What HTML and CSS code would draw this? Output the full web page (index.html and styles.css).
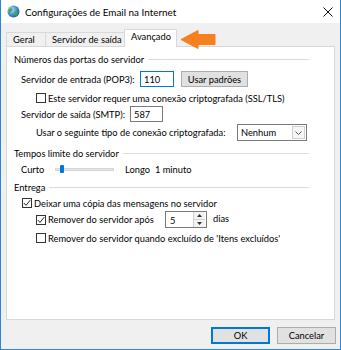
FILE: index.html
```html
<!DOCTYPE html>
<html lang="pt">
<head>
<meta charset="utf-8">
<link rel="stylesheet" href="styles.css">
</head>
<body>
<div class="window">
  <div class="titlebar">
    <svg class="appicon" width="13" height="13" viewBox="0 0 13 13">
      <defs>
        <radialGradient id="g" cx="0.35" cy="0.35" r="0.7">
          <stop offset="0" stop-color="#bfe6ff"/>
          <stop offset="0.6" stop-color="#3d8fd6"/>
          <stop offset="1" stop-color="#1d5ea8"/>
        </radialGradient>
      </defs>
      <circle cx="6.5" cy="6.5" r="6" fill="url(#g)"/>
      <path d="M3 3.5 C4.5 2.8 6 3.5 5.6 5 C5.2 6.2 3.6 6 3.4 7.5 C3.2 8.6 2.2 8.4 1.8 7.2 C1.4 5.6 2 4 3 3.5Z" fill="#4aa83f"/>
      <path d="M8 6.5 C9.2 6 10.8 6.8 10.6 8.4 C10.4 10 8.8 11 7.8 10.2 C7 9.4 7.2 7 8 6.5Z" fill="#4aa83f"/>
      <path d="M7.5 2 C8.5 1.8 9.8 2.4 9.6 3.4 C9 3.8 8 3.2 7.5 2Z" fill="#5cb84a"/>
    </svg>
    <span class="title">Configurações de Email na Internet</span>
    <svg class="close" width="10" height="10" viewBox="0 0 10 10">
      <path d="M0.5 0.5 L9.5 9.5 M9.5 0.5 L0.5 9.5" stroke="#111" stroke-width="1" fill="none"/>
    </svg>
  </div>
  <div class="client">
    <div class="tabs">
      <div class="tab">Geral</div>
      <div class="tab">Servidor de saída</div>
      <div class="tab active">Avançado</div>
    </div>
    <div class="panel">
      <div class="group-h r-h1"><span>Números das portas do servidor</span><i></i></div>
      <div class="row r-in lvl1">
        <span class="lbl w-in">Servidor de entrada (POP3):</span>
        <span class="field f-in">110</span>
        <span class="btn b-def">Usar padrões</span>
      </div>
      <div class="row r-ssl lvl2">
        <span class="cb"></span><span>Este servidor requer uma conexão criptografada (SSL/TLS)</span>
      </div>
      <div class="row r-smtp lvl1">
        <span class="lbl w-smtp">Servidor de saída (SMTP):</span>
        <span class="field f-smtp">587</span>
      </div>
      <div class="row r-enc lvl2">
        <span class="lbl w-enc">Usar o seguinte tipo de conexão criptografada:</span>
        <span class="select"><span class="sel-val">Nenhum</span><span class="sel-btn"><svg width="7" height="4" viewBox="0 0 7 4"><path d="M0.5 0.5 L3.5 3.5 L6.5 0.5" stroke="#555" fill="none"/></svg></span></span>
      </div>
      <div class="group-h r-h2"><span>Tempos limite do servidor</span><i></i></div>
      <div class="row r-time lvl1">
        <span class="lbl w-curto">Curto</span>
        <span class="slider"><span class="thumb"></span></span>
        <span class="lbl longo">Longo</span>
        <span>1 minuto</span>
      </div>
      <div class="group-h r-h3"><span>Entrega</span><i></i></div>
      <div class="row r-copy lvl1b">
        <span class="cb checked"><svg width="8" height="8" viewBox="0 0 8 8"><path d="M0.8 4 L3 6.4 L7.2 1.2" stroke="#222" stroke-width="1" fill="none"/></svg></span><span>Deixar uma cópia das mensagens no servidor</span>
      </div>
      <div class="row r-rem lvl2">
        <span class="cb checked"><svg width="8" height="8" viewBox="0 0 8 8"><path d="M0.8 4 L3 6.4 L7.2 1.2" stroke="#222" stroke-width="1" fill="none"/></svg></span><span class="lbl w-rem">Remover do servidor após</span>
        <span class="spin"><span class="spin-val">5</span><span class="spin-btns"><span class="sb"><svg width="5" height="3" viewBox="0 0 5 3"><path d="M0 3 L2.5 0 L5 3Z" fill="#333"/></svg></span><span class="sb"><svg width="5" height="3" viewBox="0 0 5 3"><path d="M0 0 L2.5 3 L5 0Z" fill="#333"/></svg></span></span></span>
        <span class="dias">dias</span>
      </div>
      <div class="row r-rem2 lvl2">
        <span class="cb"></span><span>Remover do servidor quando excluído de 'Itens excluídos'</span>
      </div>
    </div>
    <div class="buttons">
      <span class="btn b-ok">OK</span>
      <span class="btn b-cancel">Cancelar</span>
    </div>
    <svg class="arrow" width="36" height="20" viewBox="0 0 36 20">
      <path d="M0 9.5 L17 0.5 L17 4.5 L34 4.5 L34 14.5 L17 14.5 L17 18.5 Z" fill="#f7801f" stroke="#f7801f" stroke-linejoin="round" stroke-width="1"/>
    </svg>
  </div>
</div>
</body>
</html>
```
FILE: styles.css
```css
* { box-sizing: border-box; }
html, body { margin: 0; padding: 0; background: #fff; }
body {
  font-family: Lato, "Liberation Sans", sans-serif;
  font-size: 9.3px;
  color: #000;
}
.window {
  width: 341px;
  height: 350px;
  border: 1px solid #2b87d8;
  border-top: none;
  display: flex;
  flex-direction: column;
  background: #f0f0f0;
}
.titlebar {
  height: 23px;
  background: #fff;
  display: flex;
  align-items: center;
  padding-left: 6px;
  position: relative;
}
.appicon { margin-right: 5px; margin-top: -1px; }
.title { font-size: 9.9px; }
.close { margin-left: auto; margin-right: 7px; }
.client {
  flex: 1;
  position: relative;
  padding-top: 6px;
  display: flex;
  flex-direction: column;
}
.tabs {
  display: flex;
  align-items: flex-end;
  height: 17px;
  margin-left: 5px;
  position: relative;
  z-index: 2;
  white-space: nowrap;
}
.tab {
  height: 14px;
  border: 1px solid #d9d9d9;
  border-bottom: none;
  border-right: none;
  background: #f0f0f0;
  padding: 0 6px;
  display: flex;
  align-items: center;
  line-height: 1;
  flex: none;
}
.tab:first-child { width: 39px; }
.tab:nth-child(2) { width: 79px; }
.tab.active {
  height: 18px;
  margin-bottom: -1px;
  background: #fff;
  border-right: 1px solid #d9d9d9;
  width: 53px;
  padding-bottom: 3px;
}
.panel {
  margin-left: 5px;
  width: 329px;
  height: 274px;
  background: #fff;
  border: 1px solid #d9d9d9;
  padding-top: 5px;
  display: flex;
  flex-direction: column;
}
.group-h {
  display: flex;
  align-items: center;
  height: 14px;
  margin-left: 7px;
  width: 295px;
  white-space: nowrap;
}
.group-h i {
  flex: 1;
  height: 1px;
  background: #dcdcdc;
  margin-left: 4px;
}
.row {
  display: flex;
  align-items: center;
  white-space: nowrap;
}
.lvl1 { margin-left: 14px; }
.lvl1b { margin-left: 15px; }
.lvl2 { margin-left: 29px; }
.r-in { height: 16px; margin-top: 5px; }
.r-ssl { height: 12px; margin-top: 5px; }
.r-smtp { height: 16px; margin-top: 2px; }
.r-enc { height: 17px; margin-top: 2px; }
.r-h2 { margin-top: 5px; }
.r-time { height: 12px; margin-top: 3px; }
.r-h3 { margin-top: 5px; }
.r-copy { height: 12px; margin-top: 3px; }
.r-rem { height: 17px; margin-top: 2px; }
.r-rem2 { height: 12px; margin-top: 4px; }

.lbl { flex: none; overflow: visible; }
.w-in { width: 119px; }
.w-smtp { width: 109px; }
.w-enc { width: 201px; }
.w-curto { width: 34px; }
.longo { margin-right: 5px; }
.w-rem { width: 117px; }

.field {
  border: 1px solid #7a7a7a;
  height: 16px;
  display: flex;
  align-items: center;
  padding-left: 3px;
  background: #fff;
}
.f-in { width: 34px; border-color: #0078d7; }
.f-smtp { width: 33px; }
.btn {
  display: flex;
  align-items: center;
  justify-content: center;
  background: #e1e1e1;
  border: 1px solid #adadad;
}
.b-def { width: 67px; height: 16px; margin-left: 7px; }
.cb {
  width: 10px;
  height: 10px;
  border: 1px solid #333;
  background: #fff;
  margin-right: 2px;
  flex: none;
  display: flex;
  align-items: center;
  justify-content: center;
}
.select {
  width: 70px;
  height: 17px;
  border: 1px solid #7a7a7a;
  display: flex;
  align-items: center;
  background: #fff;
}
.sel-val { flex: 1; padding-left: 3px; }
.sel-btn {
  width: 13px;
  height: 13px;
  border: 1px solid #cfcfcf;
  background: #f6f6f6;
  margin-right: 1px;
  display: flex;
  align-items: center;
  justify-content: center;
}
.slider {
  width: 59px;
  height: 3px;
  background: #e6e6e6;
  border: 1px solid #d6d6d6;
  position: relative;
  margin-right: 11px;
}
.thumb {
  position: absolute;
  left: 4px;
  top: -4px;
  width: 4px;
  height: 8px;
  background: #0078d7;
  border-radius: 1px;
}
.spin {
  width: 42px;
  height: 17px;
  border: 1px solid #7a7a7a;
  display: flex;
  align-items: center;
  background: #fff;
}
.spin-val { flex: 1; padding-left: 4px; padding-top: 1px; }
.spin-btns {
  width: 12px;
  height: 15px;
  display: flex;
  flex-direction: column;
  border-left: 1px solid #d0d0d0;
  margin-right: 1px;
}
.sb {
  flex: 1;
  display: flex;
  align-items: center;
  justify-content: center;
  background: #f3f3f3;
}
.sb + .sb { border-top: 1px solid #d0d0d0; }
.dias { margin-left: 6px; margin-top: -3px; }
.buttons {
  display: flex;
  justify-content: flex-end;
  gap: 7px;
  margin-top: 7px;
  padding-right: 4px;
}
.b-ok { width: 59px; height: 17px; border: 2px solid #0078d7; }
.b-cancel { width: 59px; height: 17px; }
.arrow {
  position: absolute;
  left: 180px;
  top: 7px;
}
```
